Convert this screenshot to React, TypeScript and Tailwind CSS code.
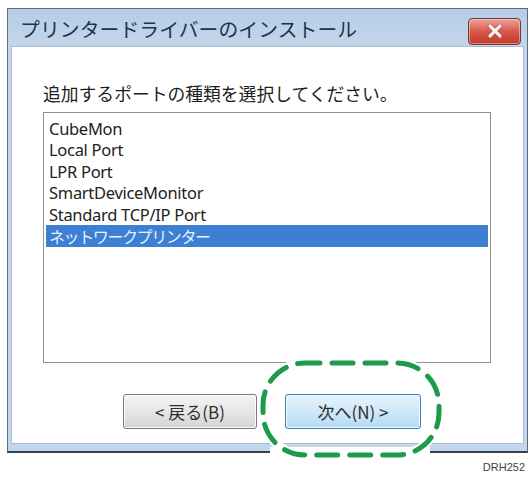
import React from "react";

const ports = [
  "CubeMon",
  "Local Port",
  "LPR Port",
  "SmartDeviceMonitor",
  "Standard TCP/IP Port",
];

const jp = { fontFamily: '"Noto Sans CJK JP", "Noto Sans", sans-serif' };
const ui = { fontFamily: '"Noto Sans", "Noto Sans CJK JP", sans-serif' };

function CloseButton() {
  return (
    <div className="flex h-[27px] w-[53px] items-center justify-center rounded-[4px] border border-[#6e3b3b] bg-gradient-to-b from-[#e9a39b] via-[#d9574b] to-[#c23a2c] shadow-[inset_0_0_0_1px_rgba(255,220,210,0.5)]">
      <svg width="18" height="14" viewBox="0 0 18 14">
        <path
          d="M4 2 L14 12 M14 2 L4 12"
          stroke="#5a2323"
          strokeWidth="5"
          strokeLinecap="round"
          opacity="0.35"
        />
        <path
          d="M4 2 L14 12 M14 2 L4 12"
          stroke="#f4eeee"
          strokeWidth="3.2"
          strokeLinecap="round"
        />
      </svg>
    </div>
  );
}

function FocusRing() {
  return (
    <svg
      className="absolute left-[258px] top-[359px]"
      width="186"
      height="100"
      viewBox="0 0 186 100"
    >
      <rect x="12" y="88" width="160" height="8" fill="#ffffff" />
      <rect
        x="5"
        y="4"
        width="176"
        height="92"
        rx="42"
        fill="none"
        stroke="#ffffff"
        strokeWidth="9"
      />
      <rect
        x="5"
        y="4"
        width="176"
        height="92"
        rx="42"
        fill="none"
        stroke="#1e9a4c"
        strokeWidth="5"
        strokeDasharray="21 12"
        strokeDashoffset="6"
        strokeLinecap="round"
      />
    </svg>
  );
}

export default function App() {
  return (
    <div className="relative h-[479px] w-[532px] overflow-hidden bg-white">
      <div className="ml-[7px] mt-[8px] flex h-[445px] w-[521px] flex-col border border-[#5b6b7b] border-b-2 border-b-[#33434f] bg-[#c3d7ec]">
        {/* title bar */}
        <div className="flex h-[37px] items-center justify-between bg-gradient-to-b from-[#b6cde6] to-[#c2d6eb] pl-[12px] pr-[6px]">
          <span
            className="mt-[2px] text-[19.8px] leading-none tracking-[0.1px] text-[#1f3347]"
            style={jp}
          >
            プリンタードライバーのインストール
          </span>
          <div className="mt-[7px]">
            <CloseButton />
          </div>
        </div>

        {/* client area */}
        <div className="mx-[3px] mb-[7px] flex flex-1 flex-col border border-[#a9bccf] bg-white pl-[31px] pr-[32px]">
          <div
            className="mt-[38px] text-[17.8px] leading-none text-[#1c1c1c]"
            style={jp}
          >
            追加するポートの種類を選択してください。
          </div>

          <div className="mt-[9px] h-[251px] border border-[#8e8f8f] bg-white px-[2px] pt-[5px]">
            {ports.map((p) => (
              <div
                key={p}
                className="h-[21.5px] pl-[3px] text-[16.5px] leading-[21.5px] tracking-[-0.3px] text-[#222222]"
                style={ui}
              >
                {p}
              </div>
            ))}
            <div
              className="h-[22px] bg-[#3d7fd3] pl-[3px] text-[16px] leading-[22px] tracking-[-1.4px] text-[#e4f0ff]"
              style={jp}
            >
              ネットワークプリンター
            </div>
          </div>

          <div className="mt-[31px] flex gap-[28px] pl-[80px]">
            <button
              className="flex h-[35px] w-[134px] items-center justify-center rounded-[3px] border border-[#7a7a7a] bg-gradient-to-b from-[#f4f4f4] via-[#e6e6e6] to-[#d3d3d3] text-[17px] text-[#2e2e2e] shadow-[inset_0_0_0_1px_#fbfbfb]"
              style={jp}
            >
              &lt; 戻る(B)
            </button>
            <button
              className="flex h-[35px] w-[136px] items-center justify-center rounded-[3px] border border-[#3c7fb1] bg-gradient-to-b from-[#e8f4fc] via-[#cfe8f8] to-[#b4dbf4] text-[17px] text-[#2e2e2e] shadow-[inset_0_0_0_1px_#f2fafe]"
              style={jp}
            >
              次へ(N) &gt;
            </button>
          </div>
        </div>
      </div>

      <div
        className="mt-[9px] pr-[7px] text-right text-[11px] leading-none text-[#3f3f3f]"
        style={{ fontFamily: '"Liberation Sans", Arial, sans-serif' }}
      >
        DRH252
      </div>

      <FocusRing />
    </div>
  );
}
